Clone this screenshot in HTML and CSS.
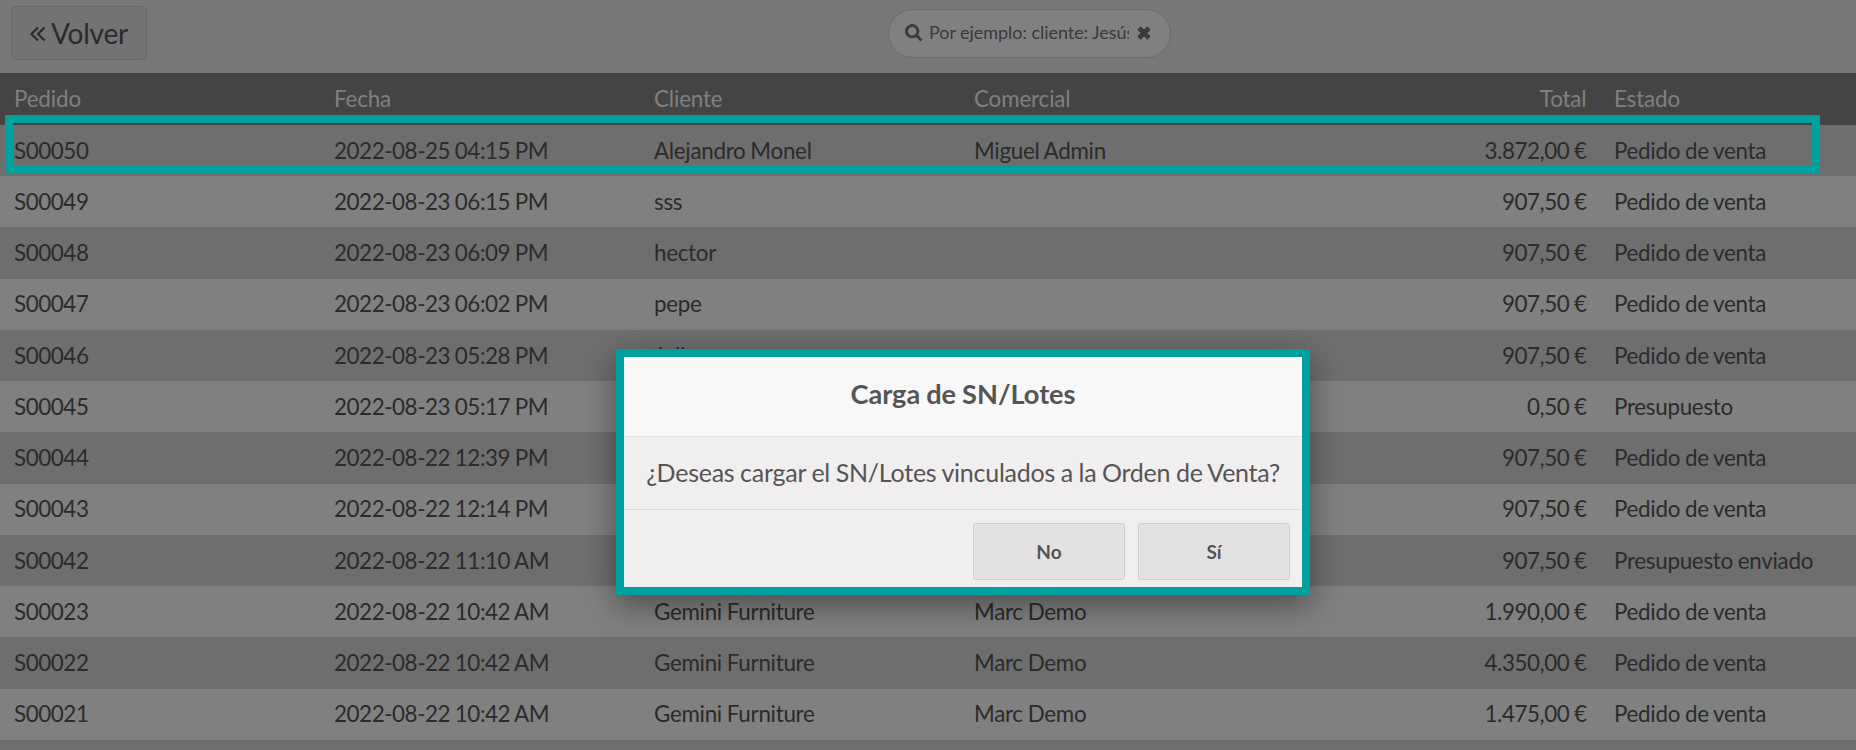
FILE: index.html
```html
<!DOCTYPE html>
<html lang="es">
<head>
<meta charset="utf-8">
<title>Pedidos</title>
<link rel="stylesheet" href="styles.css">
</head>
<body>
<header class="topbar">
  <button class="back"><svg class="back-icon" viewBox="0 0 16 16"><path d="M8 1.500 1.500 8 8 14.500M14.500 1.500 8 8l6.500 6.500"/></svg>Volver</button>
  <div class="search">
    <svg class="search-icon" viewBox="0 0 18 18"><circle cx="7.200" cy="7.200" r="5.700"/><path d="M11.500 11.500 16.500 16.500"/></svg>
    <span class="search-text">Por ejemplo: cliente: Jesús</span>
    <svg class="clear-icon" viewBox="0 0 14 14"><path d="M2 2 12 12M12 2 2 12"/></svg>
  </div>
</header>
<main class="orders">
  <div class="row head"><span>Pedido</span><span>Fecha</span><span>Cliente</span><span>Comercial</span><span class="total">Total</span><span>Estado</span></div>
  <div class="row"><span class="num">S00050</span><span class="num">2022-08-25 04:15 PM</span><span>Alejandro Monel</span><span>Miguel Admin</span><span class="total num">3.872,00 €</span><span>Pedido de venta</span></div>
  <div class="row"><span class="num">S00049</span><span class="num">2022-08-23 06:15 PM</span><span>sss</span><span></span><span class="total num">907,50 €</span><span>Pedido de venta</span></div>
  <div class="row"><span class="num">S00048</span><span class="num">2022-08-23 06:09 PM</span><span>hector</span><span></span><span class="total num">907,50 €</span><span>Pedido de venta</span></div>
  <div class="row"><span class="num">S00047</span><span class="num">2022-08-23 06:02 PM</span><span>pepe</span><span></span><span class="total num">907,50 €</span><span>Pedido de venta</span></div>
  <div class="row"><span class="num">S00046</span><span class="num">2022-08-23 05:28 PM</span><span>Julio</span><span></span><span class="total num">907,50 €</span><span>Pedido de venta</span></div>
  <div class="row"><span class="num">S00045</span><span class="num">2022-08-23 05:17 PM</span><span></span><span></span><span class="total num">0,50 €</span><span>Presupuesto</span></div>
  <div class="row"><span class="num">S00044</span><span class="num">2022-08-22 12:39 PM</span><span></span><span></span><span class="total num">907,50 €</span><span>Pedido de venta</span></div>
  <div class="row"><span class="num">S00043</span><span class="num">2022-08-22 12:14 PM</span><span></span><span></span><span class="total num">907,50 €</span><span>Pedido de venta</span></div>
  <div class="row"><span class="num">S00042</span><span class="num">2022-08-22 11:10 AM</span><span></span><span></span><span class="total num">907,50 €</span><span>Presupuesto enviado</span></div>
  <div class="row"><span class="num">S00023</span><span class="num">2022-08-22 10:42 AM</span><span>Gemini Furniture</span><span>Marc Demo</span><span class="total num">1.990,00 €</span><span>Pedido de venta</span></div>
  <div class="row"><span class="num">S00022</span><span class="num">2022-08-22 10:42 AM</span><span>Gemini Furniture</span><span>Marc Demo</span><span class="total num">4.350,00 €</span><span>Pedido de venta</span></div>
  <div class="row"><span class="num">S00021</span><span class="num">2022-08-22 10:42 AM</span><span>Gemini Furniture</span><span>Marc Demo</span><span class="total num">1.475,00 €</span><span>Pedido de venta</span></div>
  <div class="row last"></div>
</main>
<div class="highlight"></div>
<section class="dialog" role="dialog">
  <h1 class="dialog-title">Carga de SN/Lotes</h1>
  <p class="dialog-body">¿Deseas cargar el SN/Lotes vinculados a la Orden de Venta?</p>
  <footer class="dialog-actions"><button class="action">No</button><button class="action">Sí</button></footer>
</section>
</body>
</html>
```
FILE: styles.css
```css
* { box-sizing: border-box; }
body {
  position: relative;
  width: 1856px;
  height: 750px;
  margin: 0;
  overflow: hidden;
  background: #787878;
  color: #2b2b2b;
  font-family: Lato, sans-serif;
}
button { font-family: inherit; color: inherit; }
svg { fill: none; stroke: currentColor; flex: none; overflow: visible; }

.topbar {
  display: grid;
  grid-template-columns: 888px 283px;
  align-items: start;
  height: 73px;
}
.back {
  display: flex;
  align-items: center;
  gap: 5px;
  width: 136px;
  height: 54px;
  margin: 6px 0 0 11px;
  padding: 0 0 1px 18px;
  border: 1px solid #696969;
  border-radius: 5px;
  background: #737373;
  font-size: 28px;
  letter-spacing: -.25px;
}
.back-icon { width: 16px; height: 16px; margin-top: 3px; stroke-width: 2.200; }
.search {
  display: flex;
  align-items: center;
  height: 49px;
  margin-top: 9px;
  padding: 0 0 1px 16px;
  border: 1px solid #6b6b6b;
  border-radius: 25px;
  background: #808080;
  color: #3a3a3a;
  font-size: 18px;
  letter-spacing: -.05px;
}
.search-icon { width: 18px; height: 18px; stroke-width: 2.800; }
.search-text { width: 200px; margin: -2px 0 0 6px; overflow: hidden; white-space: nowrap; }
.clear-icon { width: 14px; height: 14px; margin-left: 8px; stroke-width: 4.600; }

.row {
  display: grid;
  grid-template-columns: repeat(5, 320px) 1fr;
  align-items: center;
  height: 51.250px;
  padding-bottom: .4px;
  background: #808080;
  font-size: 22.400px;
  letter-spacing: -.3px;
  word-spacing: -.5px;
  white-space: nowrap;
}
.row:nth-child(even) { background: #6e6e6e; }
.row.head { height: 51.800px; background: #444; color: #808080; letter-spacing: -.15px; }
.row.last { height: 10px; }
.row span { padding: 0 14px; }
.row .num { letter-spacing: -.44px; word-spacing: -.6px; }
.row .total { padding-right: 13.500px; text-align: right; }

.highlight {
  position: absolute;
  left: 5px;
  top: 115px;
  width: 1815px;
  height: 58px;
  border: 8px solid #00a09d;
}
.dialog {
  position: absolute;
  left: 616px;
  top: 349px;
  width: 694px;
  height: 246px;
  border: 8px solid #00a09d;
  background: #f0eeee;
  color: #555;
  box-shadow: 0 10px 30px rgba(0, 0, 0, .4);
}
.dialog-title {
  height: 80px;
  margin: 0;
  border-bottom: 1px solid #e0e0e0;
  background: #f8f8f8;
  font-size: 27.200px;
  letter-spacing: -.05px;
  word-spacing: -.5px;
  line-height: 74px;
  text-align: center;
}
.dialog-body {
  height: 73px;
  margin: 0;
  border-bottom: 1px solid #dcdcdc;
  font-size: 25px;
  letter-spacing: -.25px;
  word-spacing: -.5px;
  line-height: 71px;
  text-align: center;
  white-space: nowrap;
}
.dialog-actions { display: flex; justify-content: flex-end; gap: 13px; padding: 13px 12px 0; }
.action {
  width: 152px;
  height: 57px;
  padding: 0;
  border: 1px solid #cecece;
  border-radius: 3px;
  background: #e3e1e2;
  font-size: 19px;
  font-weight: 700;
}
```
